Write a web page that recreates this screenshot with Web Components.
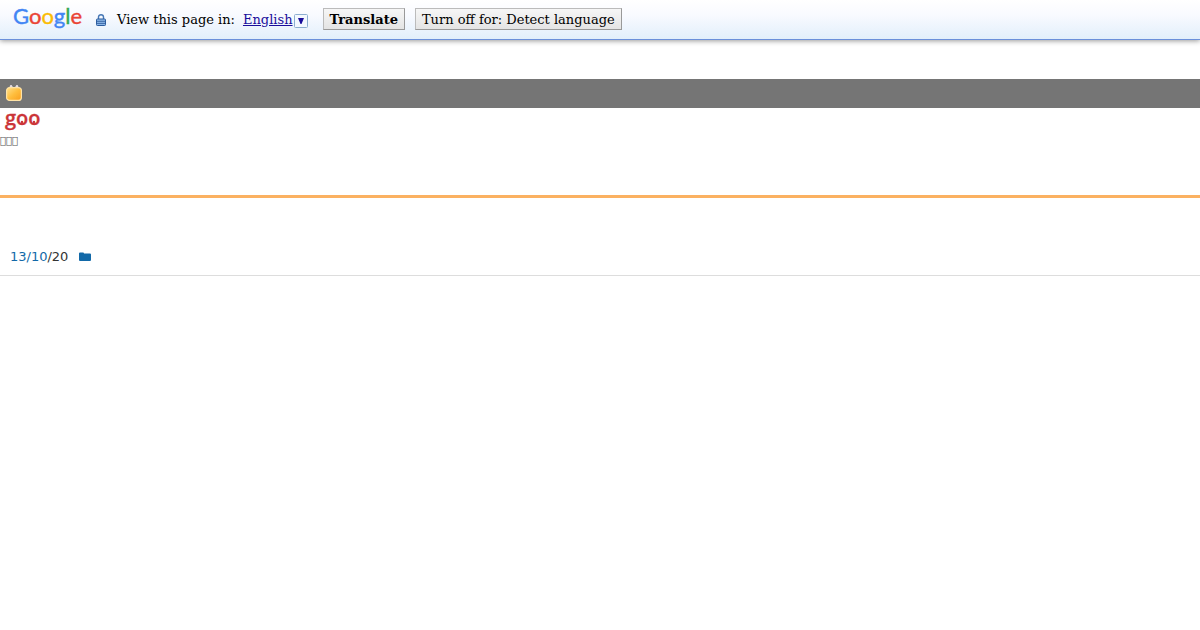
<!DOCTYPE html>
<html lang="en">
<head>
<meta charset="utf-8">
<title>goo blog</title>
<style>
body { margin: 0; background: #fff; font-family: "DejaVu Sans", sans-serif; font-size: 13px; color: #333; }
</style>
</head>
<body>
<translate-bar></translate-bar>
<blog-toolbar></blog-toolbar>
<goo-header>&#xEFF0;&#xEFF0;&#xEFF0;</goo-header>
<entry-meta><a slot="date" href="#date">13/10</a>/20</entry-meta>
<script>
const define = (name, html) => customElements.define(name, class extends HTMLElement {
  constructor() {
    super();
    this.attachShadow({ mode: "open" }).innerHTML = html;
  }
});

define("google-logo", `
<style>
:host { display: block; width: 68px; height: 32px; }
svg { display: block; overflow: visible; }
text { font: 22px "Lato", sans-serif; }
.blue { fill: #4285f4; stroke: #4285f4; }
.red { fill: #ea4335; stroke: #ea4335; }
.yellow { fill: #fbbc05; stroke: #fbbc05; }
.green { fill: #34a853; stroke: #34a853; }
text, tspan { stroke-width: .4px; }
</style>
<svg width="68" height="32" viewBox="0 0 68 32" role="img" aria-label="Google">
<text x="-1" y="21" class="blue">G<tspan class="red">o</tspan><tspan class="yellow">o</tspan><tspan class="blue">g</tspan><tspan class="green">l</tspan><tspan class="red">e</tspan></text>
</svg>`);

define("bar-button", `
<style>
:host { display: block; }
button { display: block; height: 22px; margin: 0; padding: 1px 6px 0; border: 1px solid; border-color: #bbb #999 #999 #bbb; border-radius: 0; background: linear-gradient(#f6f6f6, #e4e4e4); color: #000; font: inherit; line-height: 20px; white-space: nowrap; }
</style>
<button type="button"><slot></slot></button>`);

define("translate-bar", `
<style>
:host { display: flex; align-items: center; box-sizing: border-box; height: 40px; padding: 0 14px 1px; border-bottom: 1px solid #6b90da; background: linear-gradient(#fff, #f8faff 40%, #e2effb); box-shadow: 0 1px 5px #999; color: #000; font: 13px/20px "DejaVu Serif", serif; white-space: nowrap; }
.lock { display: block; margin: 2px 11px 0 14px; }
a { display: flex; align-items: center; gap: 1px; margin: 0 15px 0 8px; color: #1a0d9b; text-decoration: none; }
a, .label { padding-top: 2px; }
a svg { margin-top: 2px; }
.name { text-decoration: underline; }
.strong { margin-right: 10px; font-weight: bold; }
</style>
<google-logo></google-logo>
<svg class="lock" width="10" height="12" viewBox="0 0 10 12" aria-hidden="true">
<path d="M2.5 6V3a2.5 2.3 0 0 1 5 0v3" fill="none" stroke="#4777b5" stroke-width="1.4"/>
<rect x=".5" y="5" width="9" height="6.5" rx=".8" fill="#8bb6e8" stroke="#2c5c9e"/>
<path d="M1 7.3h8M1 9.4h8" stroke="#315f9e" stroke-width=".9"/>
</svg>
<span class="label">View this page in:</span>
<a href="#language"><span class="name">English</span><svg width="14" height="14" viewBox="0 0 14 14" aria-hidden="true"><rect x=".5" y=".5" width="13" height="13" rx="1" fill="#f3f8ff" stroke="#8caed0"/><path d="M4 4h6L7.5 10h-1z" fill="#1a0d9b"/></svg></a>
<bar-button class="strong">Translate</bar-button>
<bar-button>Turn off for: Detect language</bar-button>`);

define("blog-toolbar", `
<style>
:host { display: flex; align-items: center; box-sizing: border-box; height: 29px; margin-top: 39px; padding: 0 6px 1px; background: #757575; }
svg { display: block; }
</style>
<svg width="16" height="18" viewBox="0 0 16 18" role="img" aria-label="Blog">
<defs><linearGradient id="tv" x1="0" y1="0" x2="1" y2="1"><stop offset="0" stop-color="#ffe08c"/><stop offset=".5" stop-color="#ffbe3d"/><stop offset="1" stop-color="#f99d1c"/></linearGradient></defs>
<path d="M8 5 5 2M8 5l3-3" stroke="#d9cdd5" stroke-width="1.2"/>
<circle cx="5" cy="2.2" r="1.2" fill="#e5dde2"/><circle cx="11" cy="2.2" r="1.2" fill="#e5dde2"/>
<rect x=".6" y="3.6" width="14.8" height="12.8" rx="3" fill="url(#tv)" stroke="#ffe3a6" stroke-width="1.2"/>
</svg>`);

define("goo-logo", `
<style>
:host { display: block; padding-left: 5px; }
svg { display: block; overflow: visible; }
text { font: 600 20px "Open Sans", sans-serif; fill: #cb3438; stroke: #cb3438; stroke-width: .3px; }
circle { fill: #cb3438; }
</style>
<svg width="38" height="24" viewBox="0 0 38 24" role="img" aria-label="goo">
<text x="0" y="17">goo</text>
<circle cx="17" cy="14" r="1.2"/><circle cx="29" cy="14" r="1.2"/>
</svg>`);

define("goo-header", `
<style>
:host { display: block; box-sizing: border-box; height: 90px; border-bottom: 3px solid #fbb161; }
p { margin: 0; color: #000; font-size: 10px; line-height: 18px; opacity: .7; }
</style>
<goo-logo></goo-logo>
<p><slot></slot></p>`);

define("entry-meta", `
<style>
:host { display: flex; align-items: center; margin-top: 49px; padding: 0 10px 8px; border-bottom: 1px solid #ddd; line-height: 20px; }
::slotted(a), a { color: #1269a8; text-decoration: none; }
a { margin-left: 11px; }
svg { display: block; }
</style>
<span><slot name="date"></slot><slot></slot></span>
<a href="#category" aria-label="Category"><svg width="12" height="10" viewBox="0 0 12 10"><path d="M0 1.5Q0 .5 1 .5h3q1 0 1 1h6q1 0 1 1v5.5q0 1-1 1H1q-1 0-1-1z" fill="#1269a8"/></svg></a>`);
</script>
</body>
</html>
